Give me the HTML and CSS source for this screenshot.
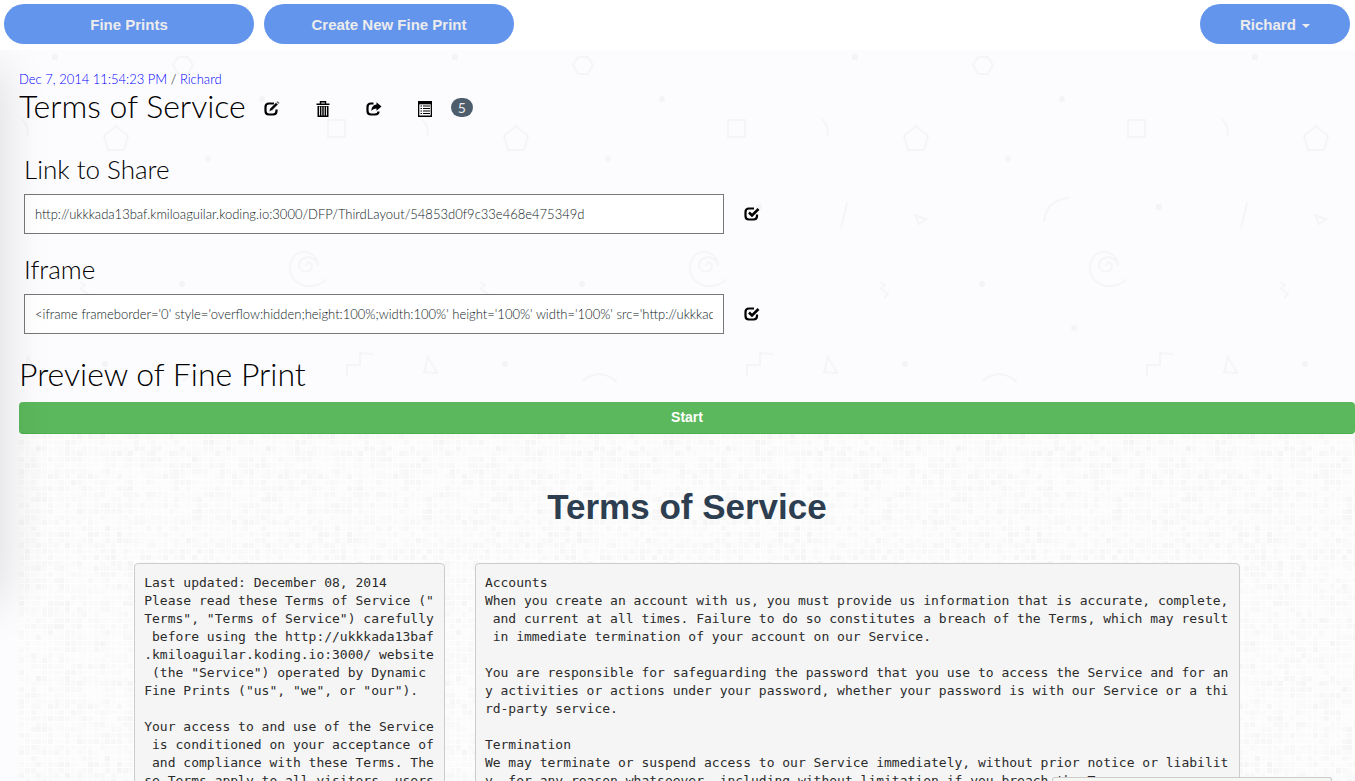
FILE: index.html
```html
<!DOCTYPE html>
<html lang="en">
<head>
<meta charset="utf-8">
<title>Terms of Service</title>
<link rel="stylesheet" href="styles.css">
</head>
<body>
<nav class="navbar">
  <a class="pill" href="#">Fine Prints</a>
  <a class="pill" href="#">Create New Fine Print</a>
  <button class="pill pill-user" type="button">Richard <span class="caret"></span></button>
</nav>
<main class="page">
  <div class="side-shadow"></div>
  <p class="meta"><a href="#">Dec 7, 2014 11:54:23 PM</a> / <a href="#">Richard</a></p>
  <header class="title-row">
    <h1 class="title">Terms of Service</h1>
    <div class="tools">
      <button class="icon-btn" type="button" aria-label="Edit">
        <svg class="icon" viewBox="0 0 16 16"><path d="M10 2.500H5Q1.500 2.500 1.500 6v4Q1.500 13.500 5 13.500h4Q12.500 13.500 12.500 10V8.500" fill="none" stroke="#000" stroke-width="2.200"/><path d="M5 10.500l1-3L12 1.500l2 2L8 9.500zM12.600.9l.9-.7 2 1.900-.8.900z" stroke="#fcfcff" stroke-width=".5"/></svg>
      </button>
      <button class="icon-btn" type="button" aria-label="Delete">
        <svg class="icon" viewBox="0 0 16 16"><path d="M5.500 2.500V.7h5v1.800M1.500 3.300h13" fill="none" stroke="#000" stroke-width="1.400"/><path d="M2.500 5h11v11h-11z"/><path d="M4.500 5.500v9M6.800 5.500v9M9.200 5.500v9M11.500 5.500v9" stroke="#fcfcff" stroke-width=".9"/></svg>
      </button>
      <button class="icon-btn" type="button" aria-label="Share">
        <svg class="icon" viewBox="0 0 16 16"><path d="M7.500 2.500H5Q1.500 2.500 1.500 6v4Q1.500 13.500 5 13.500h4Q12.500 13.500 12.500 10.500" fill="none" stroke="#000" stroke-width="2.200"/><path d="M10.500 1.200l5 4.300-5 4.300V7.500Q7 7.300 5.300 10 5.500 4 10.500 3.500z"/></svg>
      </button>
      <button class="icon-btn" type="button" aria-label="Responses">
        <svg class="icon" viewBox="0 0 16 16"><path d="M1 0h14v16H1z"/><path d="M2.300 3.300h11.400v11.200H2.300z" fill="#fcfcff"/><path d="M3.500 5h1.500M3.500 7.500h1.500M3.500 10h1.500M3.500 12.500h1.500M6 5h7M6 7.500h7M6 10h7M6 12.500h7" stroke="#000" stroke-width="1.200"/></svg>
      </button>
      <span class="badge">5</span>
    </div>
  </header>

  <section class="share">
    <label class="share-label" for="link">Link to Share</label>
    <div class="share-row">
      <input class="share-input" id="link" type="text" value="http://ukkkada13baf.kmiloaguilar.koding.io:3000/DFP/ThirdLayout/54853d0f9c33e468e475349d">
      <button class="icon-btn" type="button" aria-label="Select link">
        <svg class="icon" viewBox="0 0 16 16"><path d="M10 2.500H5Q1.500 2.500 1.500 6v4Q1.500 13.500 5 13.500h4.500Q13 13.500 13 10V8.500" fill="none" stroke="#000" stroke-width="2.200"/><path d="M5 6.500l3 3L14.500 3" fill="none" stroke="#000" stroke-width="2.600"/></svg>
      </button>
    </div>
    <label class="share-label" for="iframe">Iframe</label>
    <div class="share-row">
      <input class="share-input" id="iframe" type="text" value="&lt;iframe frameborder='0' style='overflow:hidden;height:100%;width:100%' height='100%' width='100%' src='http://ukkkada13baf.kmiloaguilar.koding.io:3000/DFP/ThirdLayout/54853d0f9c33e468e475349d'&gt;&lt;/iframe&gt;">
      <button class="icon-btn" type="button" aria-label="Select iframe">
        <svg class="icon" viewBox="0 0 16 16"><path d="M10 2.500H5Q1.500 2.500 1.500 6v4Q1.500 13.500 5 13.500h4.500Q13 13.500 13 10V8.500" fill="none" stroke="#000" stroke-width="2.200"/><path d="M5 6.500l3 3L14.500 3" fill="none" stroke="#000" stroke-width="2.600"/></svg>
      </button>
    </div>
  </section>

  <h2 class="title preview-title">Preview of Fine Print</h2>
  <button class="start" type="button">Start</button>

  <article class="preview">
    <svg class="mosaic" aria-hidden="true"><defs><pattern id="cells" width="230" height="230" patternUnits="userSpaceOnUse"></pattern></defs><rect width="100%" height="100%" fill="url(#cells)"/></svg>
    <div class="document">
      <h2 class="doc-title">Terms of Service</h2>
      <div class="columns">
        <div class="col col-narrow"><pre class="text">Last updated: December 08, 2014
Please read these Terms of Service ("
Terms", "Terms of Service") carefully
 before using the http://ukkkada13baf
.kmiloaguilar.koding.io:3000/ website
 (the "Service") operated by Dynamic 
Fine Prints ("us", "we", or "our").

Your access to and use of the Service
 is conditioned on your acceptance of
 and compliance with these Terms. The
se Terms apply to all visitors, users
 and others who access or use the Ser
vice.</pre></div>
        <div class="col col-wide"><pre class="text">Accounts
When you create an account with us, you must provide us information that is accurate, complete,
 and current at all times. Failure to do so constitutes a breach of the Terms, which may result
 in immediate termination of your account on our Service.

You are responsible for safeguarding the password that you use to access the Service and for an
y activities or actions under your password, whether your password is with our Service or a thi
rd-party service.

Termination
We may terminate or suspend access to our Service immediately, without prior notice or liabilit
y, for any reason whatsoever, including without limitation if you breach the Terms.</pre></div>
      </div>
    </div>
  </article>
</main>
<div class="status-popup"></div>
<script src="mosaic.js"></script>
</body>
</html>
```
FILE: styles.css
```css
* { box-sizing: border-box; }

body {
  margin: 0;
  height: 100vh;
  overflow: hidden;
  display: flex;
  flex-direction: column;
  background: #fff;
  color: #000;
  font-family: Lato, sans-serif;
  font-weight: 300;
}

button { font: inherit; border: 0; cursor: pointer; }

.navbar {
  flex: none;
  display: flex;
  gap: 10px;
  padding: 4px 5px 6px 4px;
}

.pill {
  width: 250px;
  height: 40px;
  border-radius: 20px;
  background: #6495ed;
  color: #ececec;
  font: bold 15px/42px "Liberation Sans", Arial, sans-serif;
  text-align: center;
  text-decoration: none;
}

.pill-user { width: 150px; margin-left: auto; padding: 0; }

.caret {
  display: inline-block;
  vertical-align: middle;
  margin-left: 2px;
  border: 4px solid transparent;
  border-top-color: #ececec;
  border-bottom: 0;
}

.page {
  position: relative;
  flex: 1;
  min-height: 0;
  overflow: hidden;
  padding: 20px 0 0 19px;
  background: #fcfcff url("data:image/svg+xml,%3Csvg xmlns='http://www.w3.org/2000/svg' width='400' height='400' fill='none' stroke='%23f5f5f6' stroke-width='2'%3E%3Cpath d='M178 7h10l5 8-5 9h-10l-5-9zM328 70h17v17h-17zM22 69q8 8 5 18M116 76l12 10-4 14h-16l-4-14zM47 153l-6 25M115 165l11 4-7 5zM244 172q2-22 25-24M80 232l5 3-4 4 7 5-4 4M28 307l9 16-13-1zM182 331q18-14 35 1M347 327v-12h13v-12l13 1M307 216c-2-5 5-5 5 0 0 8-13 7-13-1 0-11 19-10 19 1 0-18-28-20-28 2 0 20 27 23 36 11'/%3E%3Cg fill='%23f4f4f5' stroke='none'%3E%3Ccircle cx='55' cy='7' r='3'/%3E%3Ccircle cx='262' cy='49' r='3'/%3E%3Ccircle cx='208' cy='109' r='3'/%3E%3Ccircle cx='359' cy='157' r='3'/%3E%3Ccircle cx='182' cy='234' r='3'/%3E%3Ccircle cx='274' cy='278' r='3'/%3E%3Ccircle cx='105' cy='314' r='3'/%3E%3C/g%3E%3C/svg%3E");
}

.side-shadow {
  position: absolute;
  z-index: 2;
  top: 20px;
  bottom: 180px;
  left: -50px;
  width: 50px;
  box-shadow: 0 0 50px rgba(0, 0, 0, .15);
  pointer-events: none;
}

.meta { margin: 0; font-size: 13px; line-height: 18px; }
.meta a { color: #00f; text-decoration: none; }

.title-row { display: flex; align-items: center; gap: 18px; }

.title { margin: 0; font-size: 32px; line-height: 36px; font-weight: 300; }

.tools { display: flex; align-items: center; gap: 35px; padding-top: 5px; }

.icon-btn { padding: 0; background: none; line-height: 0; }
.icon { width: 16px; height: 16px; }

.badge {
  margin: 0 0 3px -17px;
  padding: 0 7px;
  border-radius: 10px;
  background: #4e5d6c;
  color: #ebebeb;
  font-size: 14px;
  line-height: 19px;
  font-weight: 400;
}

.share { padding: 20px 5px 0; }
.share-label { display: block; font-size: 26px; line-height: 50px; }
.share-row { display: flex; align-items: center; gap: 20px; margin-bottom: 10px; }

.share-input {
  width: 700px;
  height: 40px;
  padding: 0 10px;
  border: 1px solid #777;
  background: #fff;
  color: #101a24;
  font: 300 13px Lato, sans-serif;
}

.preview-title { padding-top: 12px; }

.start {
  display: block;
  width: 100%;
  margin-top: 10px;
  padding: 0;
  border-bottom: 1px solid #4cae4c;
  border-radius: 4px;
  background: #5cb85c;
  color: #fff;
  font: bold 14px/31px "Liberation Sans", Arial, sans-serif;
}

.preview { position: relative; background: #fefefe; }

.mosaic { position: absolute; width: 100%; height: 100%; }

.document { position: relative; width: 85%; margin: 0 auto; }

.doc-title {
  margin: 0;
  padding: 52px 0 36px;
  color: #2c3e50;
  font: bold 35px/41px "Liberation Sans", Arial, sans-serif;
  text-align: center;
}

.columns { display: flex; }
.col { padding: 0 15px; min-width: 0; }
.col-narrow { width: 30%; }
.col-wide { width: 70%; }

.text {
  margin: 0;
  min-height: 400px;
  padding: 10px 9px;
  border: 1px solid #ccc;
  border-radius: 4px;
  background: #f5f5f5;
  color: #2b2b2b;
  font: 13px/18px "DejaVu Sans Mono", monospace;
}

.status-popup {
  position: fixed;
  right: 23px;
  bottom: 0;
  width: 280px;
  height: 4px;
  border: 1px solid #ccc;
  border-bottom: 0;
  border-radius: 3px 3px 0 0;
  background: #f6f6f2;
}
```
FILE: mosaic.js
```js
// Fills the preview background with a repeating mosaic of pale grey cells.
const pattern = document.getElementById("cells");
const count = 40;
const pitch = 230 / count;
let seed = 7;
function random() {
  seed = (seed * 16807) % 2147483647;
  return seed / 2147483647;
}
for (let row = 0; row < count; row++) {
  for (let col = 0; col < count; col++) {
    const shade = Math.round(252 - 8 * random() * random());
    const cell = document.createElementNS("http://www.w3.org/2000/svg", "rect");
    cell.setAttribute("x", Math.round(col * pitch));
    cell.setAttribute("y", Math.round(row * pitch));
    cell.setAttribute("width", 5);
    cell.setAttribute("height", 5);
    cell.setAttribute("fill", `rgb(${shade},${shade},${shade})`);
    pattern.appendChild(cell);
  }
}
```
